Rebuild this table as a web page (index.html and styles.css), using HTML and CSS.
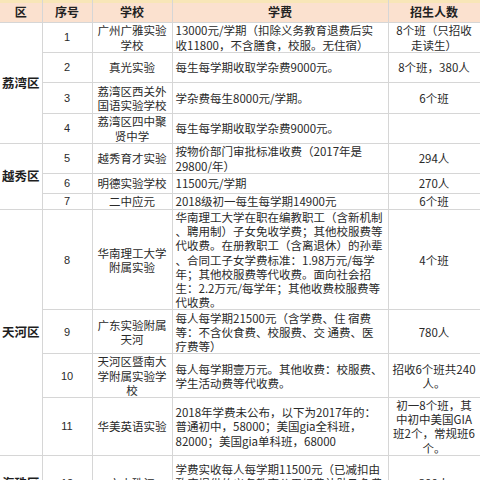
FILE: index.html
```html
<!DOCTYPE html>
<html lang="zh-CN">
<head>
<meta charset="utf-8">
<title>招生学费表</title>
<link rel="stylesheet" href="styles.css">
</head>
<body>
<table class="fees">
  <colgroup>
    <col class="c-dist"><col class="c-no"><col class="c-school"><col class="c-fee"><col class="c-num">
  </colgroup>
  <thead>
    <tr class="h-head">
      <th>区</th><th>序号</th><th>学校</th><th>学费</th><th>招生人数</th>
    </tr>
  </thead>
  <tbody>
    <tr class="h30">
      <td class="dist" rowspan="4">荔湾区</td>
      <td class="no">1</td>
      <td class="school">广州广雅实验<br>学校</td>
      <td class="fee">13000元/学期（扣除义务教育退费后实<br>收11800，不含膳食，校服。无住宿）</td>
      <td class="num">8个班（只招收<br>走读生）</td>
    </tr>
    <tr class="h30">
      <td class="no">2</td>
      <td class="school">真光实验</td>
      <td class="fee">每生每学期收取学杂费9000元。</td>
      <td class="num">8个班，380人</td>
    </tr>
    <tr class="h31">
      <td class="no">3</td>
      <td class="school">荔湾区西关外<br>国语实验学校</td>
      <td class="fee">学杂费每生8000元/学期。</td>
      <td class="num">6个班</td>
    </tr>
    <tr class="h30">
      <td class="no">4</td>
      <td class="school">荔湾区四中聚<br>贤中学</td>
      <td class="fee">每生每学期收取学杂费9000元。</td>
      <td class="num"></td>
    </tr>
    <tr class="h30">
      <td class="dist" rowspan="3">越秀区</td>
      <td class="no">5</td>
      <td class="school">越秀育才实验</td>
      <td class="fee">按物价部门审批标准收费（2017年是<br>29800/年）</td>
      <td class="num">294人</td>
    </tr>
    <tr class="h20">
      <td class="no">6</td>
      <td class="school">明德实验学校</td>
      <td class="fee">11500元/学期</td>
      <td class="num">270人</td>
    </tr>
    <tr class="h16">
      <td class="no">7</td>
      <td class="school">二中应元</td>
      <td class="fee">2018级初一每生每学期14900元</td>
      <td class="num">6个班</td>
    </tr>
    <tr class="h100">
      <td class="dist" rowspan="4">天河区</td>
      <td class="no">8</td>
      <td class="school">华南理工大学<br>附属实验</td>
      <td class="fee">华南理工大学在职在编教职工（含新机制<br>、聘用制）子女免收学费；其他校服费等<br>代收费。在册教职工（含离退休）的孙辈<br>、合同工子女学费标准：1.98万元/每学<br>年；其他校服费等代收费。面向社会招<br>生：2.2万元/每学年；其他收费校服费等<br>代收费。</td>
      <td class="num">4个班</td>
    </tr>
    <tr class="h44">
      <td class="no">9</td>
      <td class="school">广东实验附属<br>天河</td>
      <td class="fee">每人每学期21500元（含学费、住 宿费<br>等：不含伙食费、校服费、交 通费、医<br>疗费等）</td>
      <td class="num">780人</td>
    </tr>
    <tr class="h43">
      <td class="no">10</td>
      <td class="school">天河区暨南大<br>学附属实验学<br>校</td>
      <td class="fee">每人每学期壹万元。其他收费：校服费、<br>学生活动费等代收费。</td>
      <td class="num">招收6个班共240<br>人。</td>
    </tr>
    <tr class="h56">
      <td class="no">11</td>
      <td class="school">华美英语实验</td>
      <td class="fee">2018年学费未公布，以下为2017年的：<br>普通初中，58000；美国gia全科班，<br>82000；美国gia单科班，68000</td>
      <td class="num">初一8个班，其<br>中初中美国GIA<br>班2个，常规班6<br>个。</td>
    </tr>
    <tr class="h56">
      <td class="dist">海珠区</td>
      <td class="no">12</td>
      <td class="school">六中珠江</td>
      <td class="fee">学费实收每人每学期11500元（已减扣由<br>政府提供的义务教育公用经费补助及免费<br>教科书费用）</td>
      <td class="num">300人</td>
    </tr>
  </tbody>
</table>
</body>
</html>
```

FILE: styles.css
```css
html, body {
  margin: 0;
  padding: 0;
  background: #ffffff;
}

body {
  font-family: "Noto Sans CJK SC", "Noto Sans", sans-serif;
  color: #2a2a2a;
  width: 480px;
  height: 480px;
  overflow: hidden;
}

.fees {
  width: 480px;
  table-layout: fixed;
  border-collapse: collapse;
  font-size: 11.5px;
  line-height: 14.2px;
}

.c-dist { width: 42px; }
.c-no { width: 50px; }
.c-school { width: 80px; }
.c-fee { width: 216px; }
.c-num { width: 92px; }

.fees th,
.fees td {
  border: 1px solid #d6d6d6;
  padding: 0;
  vertical-align: middle;
  white-space: nowrap;
  overflow: hidden;
}

.fees tr:first-child td,
.fees thead th {
  border-top: 0;
}

.fees th:first-child,
.fees td.dist {
  border-left: 0;
}

.h-head th {
  height: 19px;
  background: #fbe1cf;
  box-shadow: inset 0 3px 0 #f8e6b8;
  padding-top: 3px;
  font-size: 12px;
  font-weight: 700;
  text-align: center;
  color: #222;
}

.dist {
  text-align: center;
  font-weight: 700;
  font-size: 12.5px;
  color: #1e1e1e;
}

.no {
  text-align: center;
  font-family: "Liberation Sans", "Noto Sans", sans-serif;
  font-size: 11px;
}

.school {
  text-align: center;
}

.fee {
  text-align: left;
  padding-left: 3px !important;
}

.num {
  text-align: center;
}

.h30 td { height: 29px; }
.h31 td { height: 30px; }
.h20 td { height: 19px; }
.h16 td { height: 15px; }
.h100 td { height: 99px; }
.h44 td { height: 43px; }
.h43 td { height: 42px; }
.h56 td { height: 55px; }
```
